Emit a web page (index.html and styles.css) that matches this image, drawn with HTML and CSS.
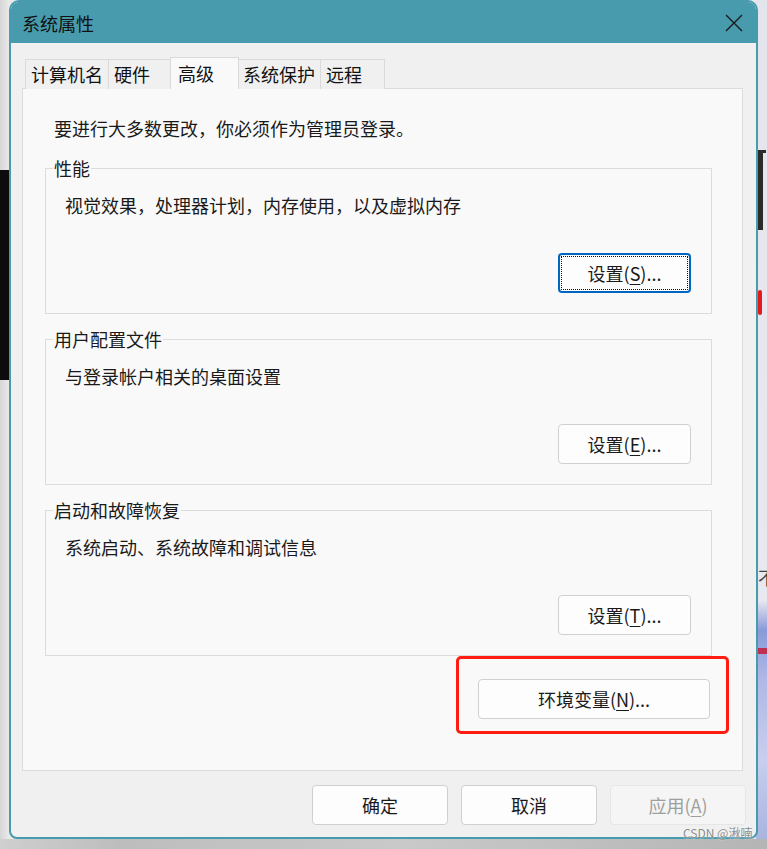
FILE: index.html
```html
<!DOCTYPE html>
<html lang="zh-CN">
<head>
    <meta charset="UTF-8">
    <meta name="viewport" content="width=device-width, initial-scale=1.0">
    <title>系统属性</title>
    <link rel="stylesheet" href="styles.css">
</head>
<body>
    <div class="backdrop">
        <div class="bg-left-bar"></div>
        <div class="bg-right">
            <div class="bg-glyph"></div>
            <div class="bg-red"></div>
            <div class="bg-char">不</div>
            <div class="bg-blue"></div>
        </div>
        <div class="bg-bottom"></div>
    </div>

    <div class="window">
        <div class="titlebar">
            <span class="title">系统属性</span>
            <span class="close">
                <svg width="18" height="18" viewBox="0 0 18 18"><path d="M1 1 L17 17 M17 1 L1 17" stroke="#1a1a1a" stroke-width="1.4" fill="none"/></svg>
            </span>
        </div>

        <div class="tabs">
            <div class="tab">计算机名</div>
            <div class="tab">硬件</div>
            <div class="tab active">高级</div>
            <div class="tab">系统保护</div>
            <div class="tab">远程</div>
        </div>

        <div class="panel">
            <p class="intro">要进行大多数更改，你必须作为管理员登录。</p>

            <fieldset class="group">
                <legend>性能</legend>
                <p>视觉效果，处理器计划，内存使用，以及虚拟内存</p>
                <div class="group-actions">
                    <button class="btn focused">设置(<u>S</u>)...</button>
                </div>
            </fieldset>

            <fieldset class="group">
                <legend>用户配置文件</legend>
                <p>与登录帐户相关的桌面设置</p>
                <div class="group-actions">
                    <button class="btn">设置(<u>E</u>)...</button>
                </div>
            </fieldset>

            <fieldset class="group">
                <legend>启动和故障恢复</legend>
                <p>系统启动、系统故障和调试信息</p>
                <div class="group-actions">
                    <button class="btn">设置(<u>T</u>)...</button>
                </div>
            </fieldset>

            <div class="env-row">
                <div class="env-wrap">
                    <button class="btn env-btn">环境变量(<u>N</u>)...</button>
                    <div class="mark"></div>
                </div>
            </div>
        </div>

        <div class="footer">
            <button class="btn footer-btn">确定</button>
            <button class="btn footer-btn">取消</button>
            <button class="btn footer-btn disabled">应用(<u>A</u>)</button>
        </div>
    </div>

    <div class="watermark">CSDN @湫喃</div>
</body>
</html>
```

FILE: styles.css
```css
* {
    box-sizing: border-box;
}
body {
    margin: 0;
    width: 767px;
    height: 849px;
    overflow: hidden;
    position: relative;
    background: #dcdcdc;
    font-family: "Noto Sans CJK SC", "Noto Sans", sans-serif;
    color: #1a1a1a;
}

/* desktop behind the dialog */
.backdrop {
    position: absolute;
    inset: 0;
    background: linear-gradient(to right, #d6d6d6, #e9e9e9 9px);
}
.bg-left-bar {
    position: absolute;
    left: 0;
    top: 170px;
    width: 9px;
    height: 210px;
    background: #0c0c0c;
}
.bg-right {
    position: absolute;
    left: 756px;
    top: 0;
    width: 11px;
    height: 840px;
    overflow: hidden;
    background: linear-gradient(to bottom, #e4e4ec 0, #e8e8f0 600px, #8a9ad8 630px, #b0b8e6 680px, #c8cfee 760px, #a8b4e0 840px);
}
.bg-glyph {
    position: absolute;
    left: 2px;
    top: 150px;
    width: 8px;
    height: 80px;
    border-left: 5px solid #2a2a2a;
    border-top: 3px solid #2a2a2a;
}
.bg-red {
    position: absolute;
    left: 2px;
    top: 290px;
    width: 4px;
    height: 25px;
    background: #e51b1b;
    border-radius: 2px;
}
.bg-char {
    position: absolute;
    left: 2px;
    top: 568px;
    font-size: 18px;
    line-height: 18px;
    color: #444;
}
.bg-blue {
    position: absolute;
    left: 2px;
    top: 648px;
    width: 9px;
    height: 6px;
    background: #c03050;
}
.bg-bottom {
    position: absolute;
    left: 0;
    top: 839px;
    width: 767px;
    height: 10px;
    background: linear-gradient(to right, #cfcfcf, #bdbdbd 120px, #c9c9c9 400px, #b5b5b5 767px);
}

/* dialog */
.window {
    position: relative;
    margin-left: 9px;
    width: 749px;
    height: 839px;
    border: 2px solid #479bad;
    border-radius: 10px 10px 8px 8px;
    background: #f0f0f0;
    overflow: hidden;
}
.titlebar {
    height: 43px;
    margin: -2px -2px 0;
    padding: 2px 0 0 13px;
    background: #479bad;
    display: flex;
    align-items: center;
    justify-content: space-between;
}
.title {
    font-size: 18px;
    line-height: 22px;
    color: #111;
}
.close {
    width: 18px;
    height: 18px;
    margin-right: 15px;
    display: flex;
}

.tabs {
    display: flex;
    align-items: flex-end;
    margin: 14px 0 -1px 14px;
    height: 32px;
    position: relative;
    z-index: 1;
}
.tab {
    min-width: 65px;
    height: 30px;
    padding: 0 5px;
    font-size: 18px;
    line-height: 29px;
    border: 1px solid #dadada;
    border-bottom: none;
    margin-right: -1px;
    background: #f0f0f0;
    color: #111;
}
.tab:first-child {
    min-width: 83px;
}
.tab.active {
    height: 32px;
    margin: 0 -2px 0 -2px;
    padding: 0 7px;
    min-width: 69px;
    background: #f9f9f9;
    line-height: 30px;
    position: relative;
    z-index: 2;
}
.tab.active + .tab {
    margin-left: 0;
}

.panel {
    margin-left: 11px;
    width: 721px;
    height: 683px;
    border: 1px solid #dcdcdc;
    background: #f9f9f9;
    padding: 28px 30px 0 22px;
}
.intro {
    margin: 0 0 18px 9px;
    font-size: 18px;
    line-height: 22px;
}

.group {
    margin: 0 0 14px;
    padding: 15px 20px 20px 19px;
    border: 1px solid #dcdcdc;
    min-width: 0;
}
.group legend {
    margin-left: -12px;
    padding: 0 1px;
    font-size: 18px;
    line-height: 22px;
}
.group p {
    margin: 0;
    font-size: 18px;
    line-height: 22px;
}
.group-actions {
    display: flex;
    justify-content: flex-end;
    margin-top: 37px;
}

.btn {
    font-family: inherit;
    font-size: 18px;
    color: #1a1a1a;
    background: #fdfdfd;
    border: 1px solid #d0d0d0;
    border-radius: 4px;
    width: 133px;
    height: 40px;
    padding: 0;
    line-height: 22px;
}
.btn u {
    text-underline-offset: 3px;
}
.btn.focused {
    border: 2px solid #0067c0;
    outline: 1px dotted #111;
    outline-offset: -4px;
}

.env-row {
    display: flex;
    justify-content: flex-end;
    margin: 23px 2px 0 0;
}
.env-wrap {
    position: relative;
}
.env-btn {
    width: 232px;
}
.mark {
    position: absolute;
    left: -22px;
    right: -19px;
    top: -23px;
    bottom: -15px;
    border: 3px solid #ff1d12;
    border-radius: 5px;
}

.footer {
    display: flex;
    justify-content: flex-end;
    gap: 13px;
    margin: 14px 10px 0 0;
}
.footer-btn {
    width: 136px;
}
.footer-btn.disabled {
    background: #f5f5f5;
    border-color: #e6e6e6;
    color: #9e9e9e;
}

.watermark {
    position: absolute;
    left: 683px;
    top: 826px;
    font-size: 12px;
    line-height: 14px;
    color: #8c8c8c;
    text-shadow: 0 0 2px #fff;
    font-family: "Noto Sans CJK SC", "Noto Sans", sans-serif;
}
```
